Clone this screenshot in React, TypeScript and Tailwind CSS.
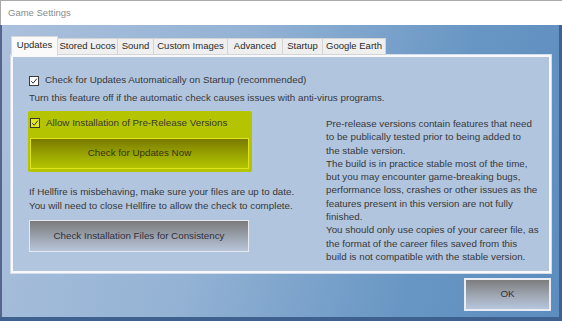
const tabs = [
  { label: "Updates", w: "w-[47px]", active: true },
  { label: "Stored Locos", w: "w-[60px]" },
  { label: "Sound", w: "w-[36px]" },
  { label: "Custom Images", w: "w-[74px]" },
  { label: "Advanced", w: "w-[55px]" },
  { label: "Startup", w: "w-[40px]" },
  { label: "Google Earth", w: "w-[63px]" },
];

const preReleaseNote = [
  "Pre-release versions contain features that need",
  "to be publically tested prior to being added to",
  "the stable version.",
  "The build is in practice stable most of the time,",
  "but you may encounter game-breaking bugs,",
  "performance loss, crashes or other issues as the",
  "features present in this version are not fully",
  "finished.",
  "You should only use copies of your career file, as",
  "the format of the career files saved from this",
  "build is not compatible with the stable version.",
];

function CheckBox({ highlighted = false }: { highlighted?: boolean }) {
  return (
    <span
      className={
        highlighted
          ? "flex h-[10px] w-[10px] shrink-0 items-center justify-center border border-[#3a3a2a] bg-[#e2e81a]"
          : "flex h-[10px] w-[10px] shrink-0 items-center justify-center border border-[#3c3c3c] bg-white"
      }
    >
      <svg width="8" height="8" viewBox="0 0 8 8" fill="none">
        <path d="M1.2 4.2 L3.2 6.2 L6.9 1.6" stroke="#333" strokeWidth="1" />
      </svg>
    </span>
  );
}

export default function App() {
  return (
    <div className="flex h-[321px] w-[562px] flex-col overflow-hidden bg-[#3f6190] font-['Liberation_Sans',Arial,sans-serif] text-[#383838] select-none">
      {/* title bar */}
      <div className="flex h-[25px] shrink-0 items-center border-t border-l border-[#a9a9a9] bg-white pl-[7px] text-[9.5px] text-[#8c8c8c]">
        Game Settings
      </div>

      {/* dialog body */}
      <div className="mr-[3px] mb-[4px] flex flex-1 flex-col border-l-2 border-[#57648c] bg-[linear-gradient(105deg,#abc0dc_0%,#93b2d4_40%,#6896c4_75%,#5c8dbf_100%)] pt-[11px] pl-[9px]">
        {/* tabs */}
        <div className="relative z-10 flex h-[19px] items-end text-[9.5px] text-[#2a2a2a]">
          {tabs.map((t) =>
            t.active ? (
              <div
                key={t.label}
                className={`${t.w} -mb-[1px] flex h-[20px] items-center justify-center border border-b-0 border-[#d9d9d9] bg-[#fafafa] pb-[3px]`}
              >
                {t.label}
              </div>
            ) : (
              <div
                key={t.label}
                className={`${t.w} flex h-[17px] items-center justify-center border border-l-0 border-[#d4d4d4] bg-[#efefef]`}
              >
                {t.label}
              </div>
            ),
          )}
        </div>

        {/* tab page */}
        <div className="flex h-[218px] w-[540px] flex-col border-2 border-[#f7f9fc] bg-[#b1c5df] pt-[17px] pl-[16px] text-[9.8px] shadow-[0_0_0_1px_#d3dce8]">
          <div className="flex h-[13px] items-center gap-[6px]">
            <CheckBox />
            <span>Check for Updates Automatically on Startup (recommended)</span>
          </div>
          <div className="mt-[4px] h-[13px] leading-[13px] whitespace-nowrap">
            Turn this feature off if the automatic check causes issues with anti-virus programs.
          </div>

          <div className="mt-[7px] flex">
            <div className="flex w-[223px] flex-col">
              {/* marker highlight */}
              <div className="-ml-[1px] flex flex-col rounded-[2px] bg-[#b5c400] pt-[7px] pr-[2px] pb-[3px] pl-[2px]">
                <div className="flex h-[10px] items-center gap-[6px]">
                  <CheckBox highlighted />
                  <span>Allow Installation of Pre-Release Versions</span>
                </div>
                <button className="mt-[10px] flex h-[31px] w-[219px] items-center justify-center border border-[#dfe41c] bg-[linear-gradient(#7a7a00,#9aa600_55%,#b3c400)] text-[9.8px] text-[#34340e]">
                  Check for Updates Now
                </button>
              </div>

              <div className="mt-[13px] leading-[14px] whitespace-nowrap">
                <div>If Hellfire is misbehaving, make sure your files are up to date.</div>
                <div>You will need to close Hellfire to allow the check to complete.</div>
              </div>

              <button className="mt-[7px] flex h-[32px] w-[220px] items-center justify-center border border-[#e6eaf0] bg-[linear-gradient(#7b7b7b,#9ca4b0_55%,#b8c5d9)] text-[9.8px] text-[#2f2f3a]">
                Check Installation Files for Consistency
              </button>
            </div>

            <div className="ml-[74px] pt-[6px] leading-[13.3px] whitespace-nowrap">
              {preReleaseNote.map((line) => (
                <div key={line}>{line}</div>
              ))}
            </div>
          </div>
        </div>

        <div className="mt-[5px] flex w-[540px] justify-end">
          <button className="flex h-[33px] w-[87px] items-center justify-center border-2 border-[#e9edf3] bg-[linear-gradient(#7d7d7d,#a0a8b4_55%,#b6c6dc)] text-[9.8px] text-[#30303c]">
            OK
          </button>
        </div>
      </div>
    </div>
  );
}
